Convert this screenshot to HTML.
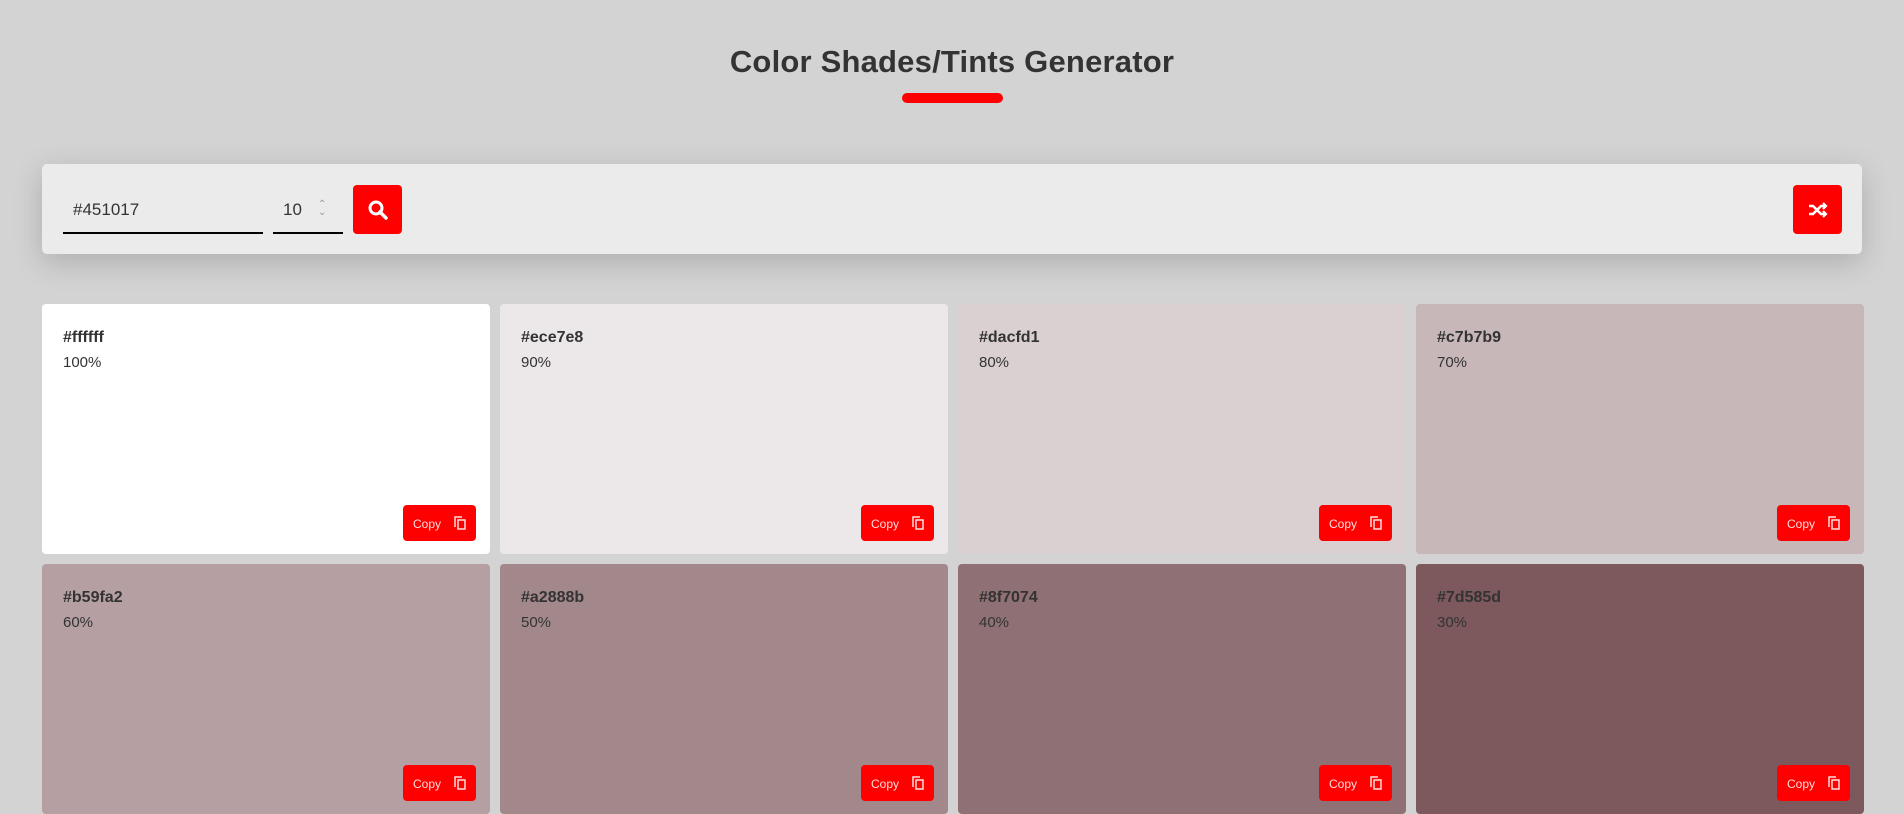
<!DOCTYPE html>
<html><head><meta charset="utf-8"><style>
*{box-sizing:border-box;margin:0;padding:0}
body{width:1904px;height:776px;overflow:hidden;background:#d3d3d3;font-family:"Liberation Sans",sans-serif;color:#333;position:relative}
h1{position:absolute;top:44px;left:0;width:100%;text-align:center;font-size:31px;font-weight:bold;color:#333;letter-spacing:0.2px}
.bar{position:absolute;left:902px;top:93px;width:101px;height:10px;background:#f00;border-radius:5px}
.tool{position:absolute;left:42px;top:164px;width:1820px;height:90px;background:#ebebeb;border-radius:5px;box-shadow:0 8px 30px rgba(0,0,0,.18)}
.inp{position:absolute;top:28px;height:42px;border-bottom:2px solid #000;font-size:17px;color:#333;padding:8px 0 0 10px}
.btn{position:absolute;top:21px;width:49px;height:49px;background:#f00;border-radius:4px;display:flex;align-items:center;justify-content:center}
.card{position:absolute;width:448px;height:250px;border-radius:4px}
.card b{position:absolute;left:21px;top:25px;font-size:16px}
.card span{position:absolute;left:21px;top:50px;font-size:15px}
.copy{position:absolute;right:14px;top:201px;width:73px;height:36px;background:#f00;border-radius:4px;color:#fdd;font-size:12px;padding:12px 0 0 10px}
.copy svg{position:absolute;right:10px;top:11px}
</style></head><body>
<h1>Color Shades/Tints Generator</h1>
<div class="bar"></div>
<div class="tool">
<div class="inp" style="left:21px;width:200px">#451017</div>
<div class="inp" style="left:231px;width:70px">10<span style="position:absolute;left:45px;top:9px;font-size:10px;color:#999;line-height:8px">⌃<br>⌄</span></div>
<div class="btn" style="left:311px"><svg width="22" height="22" viewBox="0 0 22 22"><circle cx="9" cy="9" r="6" fill="none" stroke="#fff" stroke-width="3"/><path d="M13 13l6 6" stroke="#fff" stroke-width="3.5" stroke-linecap="round"/></svg></div>
<div class="btn" style="left:1751px"><svg width="22" height="22" viewBox="0 0 22 22" fill="none" stroke="#fff" stroke-width="2.6"><path d="M2 7h4l8 8h5M2 15h4l8-8h5"/><path d="M16 4l3 3-3 3M16 12l3 3-3 3" stroke-width="2.2"/></svg></div>
</div>
<div class="card" style="left:42px;top:304px;background:#fff"><b>#ffffff</b><span>100%</span><div class="copy">Copy<svg width="12" height="14" viewBox="0 0 12 14" fill="none" stroke="#fdd" stroke-width="1.5"><path d="M1 11V1h7"/><rect x="4" y="4" width="7" height="9"/></svg></div></div>
<div class="card" style="left:500px;top:304px;background:#ece7e8"><b>#ece7e8</b><span>90%</span><div class="copy">Copy<svg width="12" height="14" viewBox="0 0 12 14" fill="none" stroke="#fdd" stroke-width="1.5"><path d="M1 11V1h7"/><rect x="4" y="4" width="7" height="9"/></svg></div></div>
<div class="card" style="left:958px;top:304px;background:#dacfd1"><b>#dacfd1</b><span>80%</span><div class="copy">Copy<svg width="12" height="14" viewBox="0 0 12 14" fill="none" stroke="#fdd" stroke-width="1.5"><path d="M1 11V1h7"/><rect x="4" y="4" width="7" height="9"/></svg></div></div>
<div class="card" style="left:1416px;top:304px;background:#c7b7b9"><b>#c7b7b9</b><span>70%</span><div class="copy">Copy<svg width="12" height="14" viewBox="0 0 12 14" fill="none" stroke="#fdd" stroke-width="1.5"><path d="M1 11V1h7"/><rect x="4" y="4" width="7" height="9"/></svg></div></div>
<div class="card" style="left:42px;top:564px;background:#b59fa2"><b>#b59fa2</b><span>60%</span><div class="copy">Copy<svg width="12" height="14" viewBox="0 0 12 14" fill="none" stroke="#fdd" stroke-width="1.5"><path d="M1 11V1h7"/><rect x="4" y="4" width="7" height="9"/></svg></div></div>
<div class="card" style="left:500px;top:564px;background:#a2888b"><b>#a2888b</b><span>50%</span><div class="copy">Copy<svg width="12" height="14" viewBox="0 0 12 14" fill="none" stroke="#fdd" stroke-width="1.5"><path d="M1 11V1h7"/><rect x="4" y="4" width="7" height="9"/></svg></div></div>
<div class="card" style="left:958px;top:564px;background:#8f7074"><b>#8f7074</b><span>40%</span><div class="copy">Copy<svg width="12" height="14" viewBox="0 0 12 14" fill="none" stroke="#fdd" stroke-width="1.5"><path d="M1 11V1h7"/><rect x="4" y="4" width="7" height="9"/></svg></div></div>
<div class="card" style="left:1416px;top:564px;background:#7d585d"><b>#7d585d</b><span>30%</span><div class="copy">Copy<svg width="12" height="14" viewBox="0 0 12 14" fill="none" stroke="#fdd" stroke-width="1.5"><path d="M1 11V1h7"/><rect x="4" y="4" width="7" height="9"/></svg></div></div>
</body></html>
